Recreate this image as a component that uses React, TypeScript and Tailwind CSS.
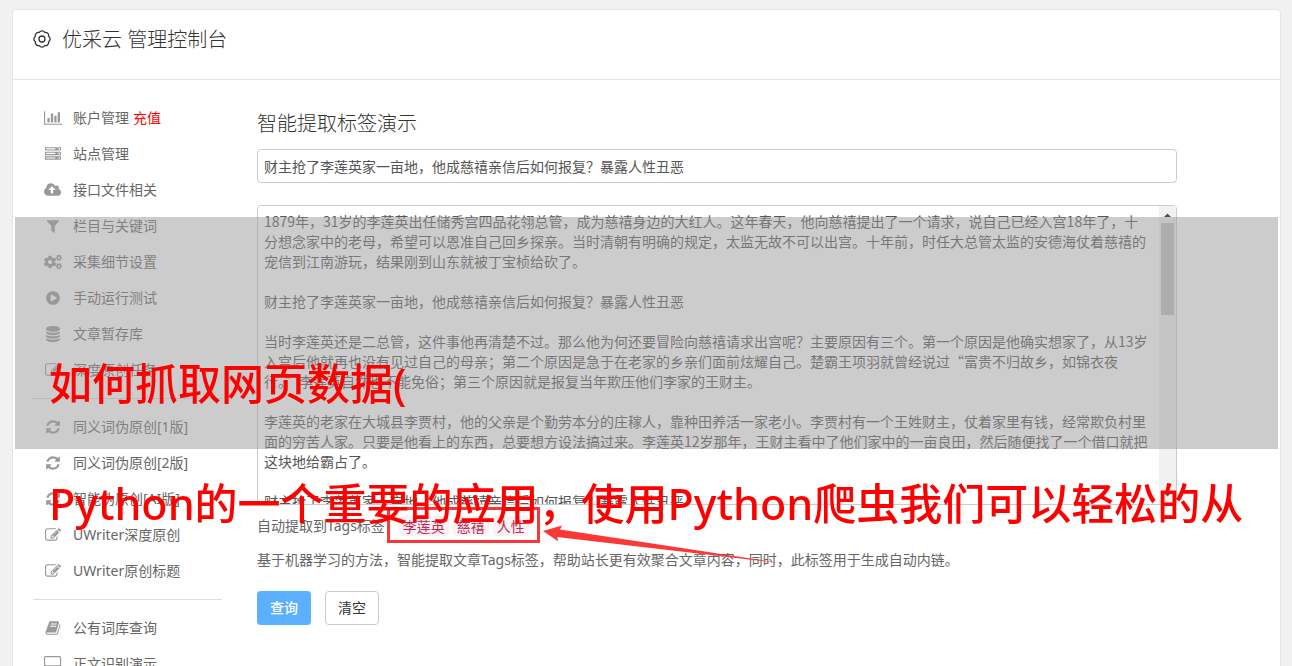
import type { ReactNode } from "react";
import { FaCogs } from "react-icons/fa";

type IconProps = { w?: number; d: string };

// Icon glyphs share a 1792-unit em, drawn at 16px
function Glyph({ w = 1792, d }: IconProps) {
  return (
    <svg
      viewBox={`0 0 ${w} 1792`}
      className="h-4 w-auto max-w-none overflow-visible"
      fill="currentColor"
      aria-hidden="true"
    >
      <path d={d} />
    </svg>
  );
}

const PATHS = {
  chart:
    "M640 896v512h-256v-512h256zm384-512v1024h-256v-1024h256zm1024 1152v128h-2048v-1536h128v1408h1920zm-640-896v768h-256v-768h256zm384-384v1152h-256v-1152h256z",
  server:
    "M128 1408h1024v-128h-1024v128zm0-512h1024v-128h-1024v128zm1568 448q0-40-28-68t-68-28-68 28-28 68 28 68 68 28 68-28 28-68zm-1568-960h1024v-128h-1024v128zm1568 448q0-40-28-68t-68-28-68 28-28 68 28 68 68 28 68-28 28-68zm0-512q0-40-28-68t-68-28-68 28-28 68 28 68 68 28 68-28 28-68zm96 832v384h-1792v-384h1792zm0-512v384h-1792v-384h1792zm0-512v384h-1792v-384h1792z",
  upload:
    "M1280 864q0-14-9-23l-352-352q-9-9-23-9t-23 9l-351 351q-10 12-10 24 0 14 9 23t23 9h224v352q0 13 9.5 22.5t22.5 9.5h192q13 0 22.5-9.5t9.5-22.5v-352h224q13 0 22.5-9.5t9.5-22.5zm640 288q0 159-112.5 271.5t-271.5 112.5h-1088q-185 0-316.5-131.5t-131.5-316.5q0-130 70-240t188-165q-2-30-2-43 0-212 150-362t362-150q156 0 285.5 87t188.5 231q71-62 166-62 106 0 181 75t75 181q0 76-41 138 130 31 213.5 135.5t83.5 238.5z",
  filter:
    "M1595 295q17 41-14 70l-493 493v742q0 42-39 59-13 5-25 5-27 0-45-19l-256-256q-19-19-19-45v-486l-493-493q-31-29-14-70 17-39 59-39h1280q42 0 59 39z",
  play: "M896 128q209 0 385.5 103t279.5 279.5 103 385.5-103 385.5-279.5 279.5-385.5 103-385.5-103-279.5-279.5-103-385.5 103-385.5 279.5-279.5 385.5-103zm384 823q32-18 32-55t-32-55l-544-320q-31-19-64-1-32 19-32 56v640q0 37 32 56 16 8 32 8 17 0 32-9z",
  database:
    "M896 768q237 0 443-43t325-127v170q0 69-103 128t-280 93.5-385 34.5-385-34.5-280-93.5-103-128v-170q119 84 325 127t443 43zm0 768q237 0 443-43t325-127v170q0 69-103 128t-280 93.5-385 34.5-385-34.5-280-93.5-103-128v-170q119 84 325 127t443 43zm0-384q237 0 443-43t325-127v170q0 69-103 128t-280 93.5-385 34.5-385-34.5-280-93.5-103-128v-170q119 84 325 127t443 43zm0-1152q208 0 385 34.5t280 93.5 103 128v128q0 69-103 128t-280 93.5-385 34.5-385-34.5-280-93.5-103-128v-128q0-69 103-128t280-93.5 385-34.5z",
  edit: "M888 1184l116-116-152-152-116 116v56h96v96h56zm440-720q-16-16-33 1l-350 350q-17 17-1 33t33-1l350-350q17-17 1-33zm80 594v190q0 119-84.5 203.5t-203.5 84.5h-832q-119 0-203.5-84.5t-84.5-203.5v-832q0-119 84.5-203.5t203.5-84.5h832q63 0 117 25 15 7 18 23 3 17-9 29l-49 49q-14 14-32 8-23-6-45-6h-832q-66 0-113 47t-47 113v832q0 66 47 113t113 47h832q66 0 113-47t47-113v-126q0-13 9-22l64-64q15-15 35-7t20 29zm-96-738l288 288-672 672h-288v-288zm444 132l-92 92-288-288 92-92q28-28 68-28t68 28l152 152q28 28 28 68t-28 68z",
  refresh:
    "M1639 1056q0 5-1 7-64 268-268 434.5t-478 166.5q-146 0-282.5-55t-243.5-157l-129 129q-19 19-45 19t-45-19-19-45v-448q0-26 19-45t45-19h448q26 0 45 19t19 45-19 45l-137 137q71 66 161 102t187 36q134 0 250-65t186-179q11-17 53-117 8-23 30-23h192q13 0 22.5 9.5t9.5 22.5zm25-800v448q0 26-19 45t-45 19h-448q-26 0-45-19t-19-45 19-45l138-138q-148-137-349-137-134 0-250 65t-186 179q-11 17-53 117-8 23-30 23h-199q-13 0-22.5-9.5t-9.5-22.5v-7q65-268 270-434.5t480-166.5q146 0 284 55.5t245 156.5l130-129q19-19 45-19t45 19 19 45z",
  book: "M1703 478q40 57 18 129l-275 906q-19 64-76.5 107.5t-122.5 43.5h-923q-77 0-148.5-53.5t-99.5-131.5q-24-67-2-127 0-4 3-27t4-37q1-8-3-21.5t-3-19.5q2-11 8-21t16.5-23.5 16.5-23.5q23-38 45-91.5t30-91.5q3-10 .5-30t-.5-28q3-11 17-28t17-23q21-36 42-92t25-90q1-9-2.5-32t.5-28q4-13 22-30.5t22-22.5q19-26 42.5-84.5t27.5-96.5q1-8-3-25.5t-2-26.5q2-8 9-18t18-23 17-21q8-12 16.5-30.5t15-35 16-36 19.5-32 26.5-23.5 36-11.5 47.5 5.5l-1 3q38-9 51-9h761q74 0 114 56t18 130l-274 906q-36 119-71.5 153.5t-128.5 34.5h-869q-27 0-38 15-11 16-1 43 24 70 144 70h923q29 0 56-15.5t35-41.5l300-987q7-22 5-57 38 15 59 43zm-1064 2q-4 13 2 22.5t20 9.5h608q13 0 25.5-9.5t16.5-22.5l21-64q4-13-2-22.5t-20-9.5h-608q-13 0-25.5 9.5t-16.5 22.5zm-83 256q-4 13 2 22.5t20 9.5h608q13 0 25.5-9.5t16.5-22.5l21-64q4-13-2-22.5t-20-9.5h-608q-13 0-25.5 9.5t-16.5 22.5z",
  desktop:
    "M1792 992v-832q0-13-9.500-22.500t-22.500-9.500h-1600q-13 0-22.500 9.500t-9.500 22.500v832q0 13 9.500 22.500t22.500 9.500h1600q13 0 22.500-9.500t9.500-22.500zm128-832v1088q0 66-47 113t-113 47h-544q0 37 16 77.500t32 71 16 43.500q0 26-19 45t-45 19h-512q-26 0-45-19t-19-45q0-14 16-44t32-70 16-78h-544q-66 0-113-47t-47-113v-1088q0-66 47-113t113-47h1600q66 0 113 47t47 113z",
};

type MenuItem = { label: string; icon: ReactNode; extra?: string };

const edit = <Glyph d={PATHS.edit} />;
const refresh = <Glyph d={PATHS.refresh} />;

const MENU: MenuItem[][] = [
  [
    { label: "账户管理", icon: <Glyph w={2048} d={PATHS.chart} />, extra: "充值" },
    { label: "站点管理", icon: <Glyph d={PATHS.server} /> },
    { label: "接口文件相关", icon: <Glyph w={1920} d={PATHS.upload} /> },
    { label: "栏目与关键词", icon: <Glyph d={PATHS.filter} /> },
    { label: "采集细节设置", icon: <FaCogs size={18} /> },
    { label: "手动运行测试", icon: <Glyph d={PATHS.play} /> },
    { label: "文章暂存库", icon: <Glyph d={PATHS.database} /> },
    { label: "深度原创任务", icon: edit },
  ],
  [
    { label: "同义词伪原创[1版]", icon: refresh },
    { label: "同义词伪原创[2版]", icon: refresh },
    { label: "智能伪原创[AI版]", icon: refresh },
    { label: "UWriter深度原创", icon: edit },
    { label: "UWriter原创标题", icon: edit },
  ],
  [
    { label: "公有词库查询", icon: <Glyph d={PATHS.book} /> },
    { label: "正文识别演示", icon: <Glyph w={1920} d={PATHS.desktop} /> },
  ],
];

const TITLE = "财主抢了李莲英家一亩地，他成慈禧亲信后如何报复？暴露人性丑恶";

const ARTICLE = [
  "1879年，31岁的李莲英出任储秀宫四品花翎总管，成为慈禧身边的大红人。这年春天，他向慈禧提出了一个请求，说自己已经入宫18年了，十分想念家中的老母，希望可以恩准自己回乡探亲。当时清朝有明确的规定，太监无故不可以出宫。十年前，时任大总管太监的安德海仗着慈禧的宠信到江南游玩，结果刚到山东就被丁宝桢给砍了。",
  TITLE,
  "当时李莲英还是二总管，这件事他再清楚不过。那么他为何还要冒险向慈禧请求出宫呢？主要原因有三个。第一个原因是他确实想家了，从13岁入宫后他就再也没有见过自己的母亲；第二个原因是急于在老家的乡亲们面前炫耀自己。楚霸王项羽就曾经说过“富贵不归故乡，如锦衣夜行。”李莲英自然也不能免俗；第三个原因就是报复当年欺压他们李家的王财主。",
  "李莲英的老家在大城县李贾村，他的父亲是个勤劳本分的庄稼人，靠种田养活一家老小。李贾村有一个王姓财主，仗着家里有钱，经常欺负村里面的穷苦人家。只要是他看上的东西，总要想方设法搞过来。李莲英12岁那年，王财主看中了他们家中的一亩良田，然后随便找了一个借口就把这块地给霸占了。",
  TITLE,
].join("\n\n");

const TAGS = ["李莲英", "慈禧", "人性"];

function GearIcon() {
  return (
    <svg
      viewBox="0 0 24 24"
      className="size-[18px]"
      fill="none"
      stroke="#333"
      strokeWidth="1.7"
      strokeLinejoin="round"
      aria-hidden="true"
    >
      <path d="M20.870 8.330A4.400 4.400 0 0 1 20.870 15.670A4.400 4.400 0 0 1 15.670 20.870A4.400 4.400 0 0 1 8.330 20.870A4.400 4.400 0 0 1 3.130 15.670A4.400 4.400 0 0 1 3.130 8.330A4.400 4.400 0 0 1 8.330 3.130A4.400 4.400 0 0 1 15.670 3.130A4.400 4.400 0 0 1 20.870 8.330Z" />
      <circle cx="12" cy="12" r="4" />
    </svg>
  );
}

function Sidebar() {
  return (
    <nav className="w-[189px] shrink-0">
      {MENU.map((group, i) => (
        <ul key={i} className={i > 0 ? "mt-2.5 border-t border-[#ddd] pt-2.5" : ""}>
          {group.map((item) => (
            <li key={item.label} className="flex h-9 items-center whitespace-nowrap">
              <a href="#" className="flex items-center">
                <span className="flex w-10 justify-center text-[#999]">{item.icon}</span>
                {item.label}
              </a>
              {item.extra && (
                <a href="#" className="ml-1 text-[#f00]">
                  {item.extra}
                </a>
              )}
            </li>
          ))}
        </ul>
      ))}
    </nav>
  );
}

// Always-visible scroll gutter on the right edge of the article box
function ScrollGutter() {
  return (
    <div
      className="pointer-events-none absolute inset-y-px right-px flex w-[17px] flex-col items-center rounded-r bg-[#f1f1f1]"
      aria-hidden="true"
    >
      <svg viewBox="0 0 17 17" className="size-[17px]">
        <path d="M5 11L8.500 7.500L12 11Z" fill="#505050" />
      </svg>
      <div className="h-[92px] w-[13px] bg-[#c1c1c1]" />
      <svg viewBox="0 0 17 17" className="mt-auto size-[17px]">
        <path d="M5 6L8.500 9.500L12 6Z" fill="#505050" />
      </svg>
    </div>
  );
}

function DemoForm() {
  return (
    <form className="mr-[83px] min-w-0 flex-1" onSubmit={(e) => e.preventDefault()}>
      <h2 className="mt-[9px] text-xl leading-[30px] font-light text-[#333]">智能提取标签演示</h2>
      <input
        type="text"
        aria-label="标题"
        defaultValue={TITLE}
        className="mt-2.5 block h-[34px] w-full rounded border border-[#ccc] bg-white px-1.5 text-[#555] outline-none"
      />
      <div className="relative mt-[22px]">
        <textarea
          aria-label="正文"
          defaultValue={ARTICLE}
          className="block h-[300px] w-full resize-none overflow-y-auto rounded border border-[#ccc] bg-white py-[5px] pr-[27px] pl-1.5 font-['Noto_Sans_CJK_SC',sans-serif] leading-5 text-[#555] outline-none"
        />
        <ScrollGutter />
      </div>

      <div className="mt-[11px] flex h-5 items-center">
        <span>自动提取到Tags标签：</span>
        <div className="flex gap-1">
          {TAGS.map((tag) => (
            <code
              key={tag}
              className="rounded bg-[#f9f2f4] px-1 font-['Noto_Sans_CJK_SC',sans-serif] text-sm leading-5 text-[#c7254e]"
            >
              {tag}
            </code>
          ))}
        </div>
      </div>
      <p className="mt-3.5 leading-5">
        基于机器学习的方法，智能提取文章Tags标签，帮助站长更有效聚合文章内容，同时，此标签用于生成自动内链。
      </p>
      <div className="mt-[21px] flex gap-3.5">
        <button
          type="submit"
          className="h-[34px] w-[54px] rounded bg-[#5aafff] font-medium text-white"
        >
          查询
        </button>
        <button
          type="reset"
          className="h-[34px] w-[54px] rounded border border-[#ccc] bg-white text-[#333]"
        >
          清空
        </button>
      </div>
    </form>
  );
}

// Red marker frame and arrow that point at the extracted tags
function Annotation() {
  return (
    <svg
      className="pointer-events-none absolute top-[497px] left-[374px] h-[70px] w-[400px]"
      viewBox="387 507 400 70"
      aria-hidden="true"
    >
      <rect x="388.500" y="508.500" width="150" height="33" fill="none" stroke="#fb3838" strokeWidth="3" />
      <path d="M543 531L562 525.500L560 529.500L783 563.500L557 537L558.500 541.500Z" fill="#fb3838" />
    </svg>
  );
}

export default function App() {
  return (
    <div className="h-screen overflow-hidden bg-[#f1f1f1] pt-[9px] pr-[11px] pl-3 font-['Noto_Sans','Noto_Sans_CJK_SC',sans-serif] text-sm text-[#666]">
      <main className="relative min-h-full rounded border border-[#e5e5e5] bg-white">
        <header className="flex h-[70px] items-start gap-[11px] border-b border-[#e5e5e5] px-5 pt-5">
          <GearIcon />
          <h1 className="text-xl leading-5 font-light text-[#333]">优采云 管理控制台</h1>
        </header>
        <div className="flex gap-[35px] px-5 pt-5">
          <Sidebar />
          <DemoForm />
        </div>

        <Annotation />
        <div className="pointer-events-none absolute inset-x-0.5 top-[207px] h-[232px] bg-[#999]/50" />
        <div className="pointer-events-none absolute top-[344px] left-9 text-[43px] leading-[60px] font-medium whitespace-nowrap text-[#f00]">
          <p>如何抓取网页数据(</p>
          <p className="mt-[60px]">Python的一个重要的应用，使用Python爬虫我们可以轻松的从</p>
        </div>
      </main>
    </div>
  );
}
